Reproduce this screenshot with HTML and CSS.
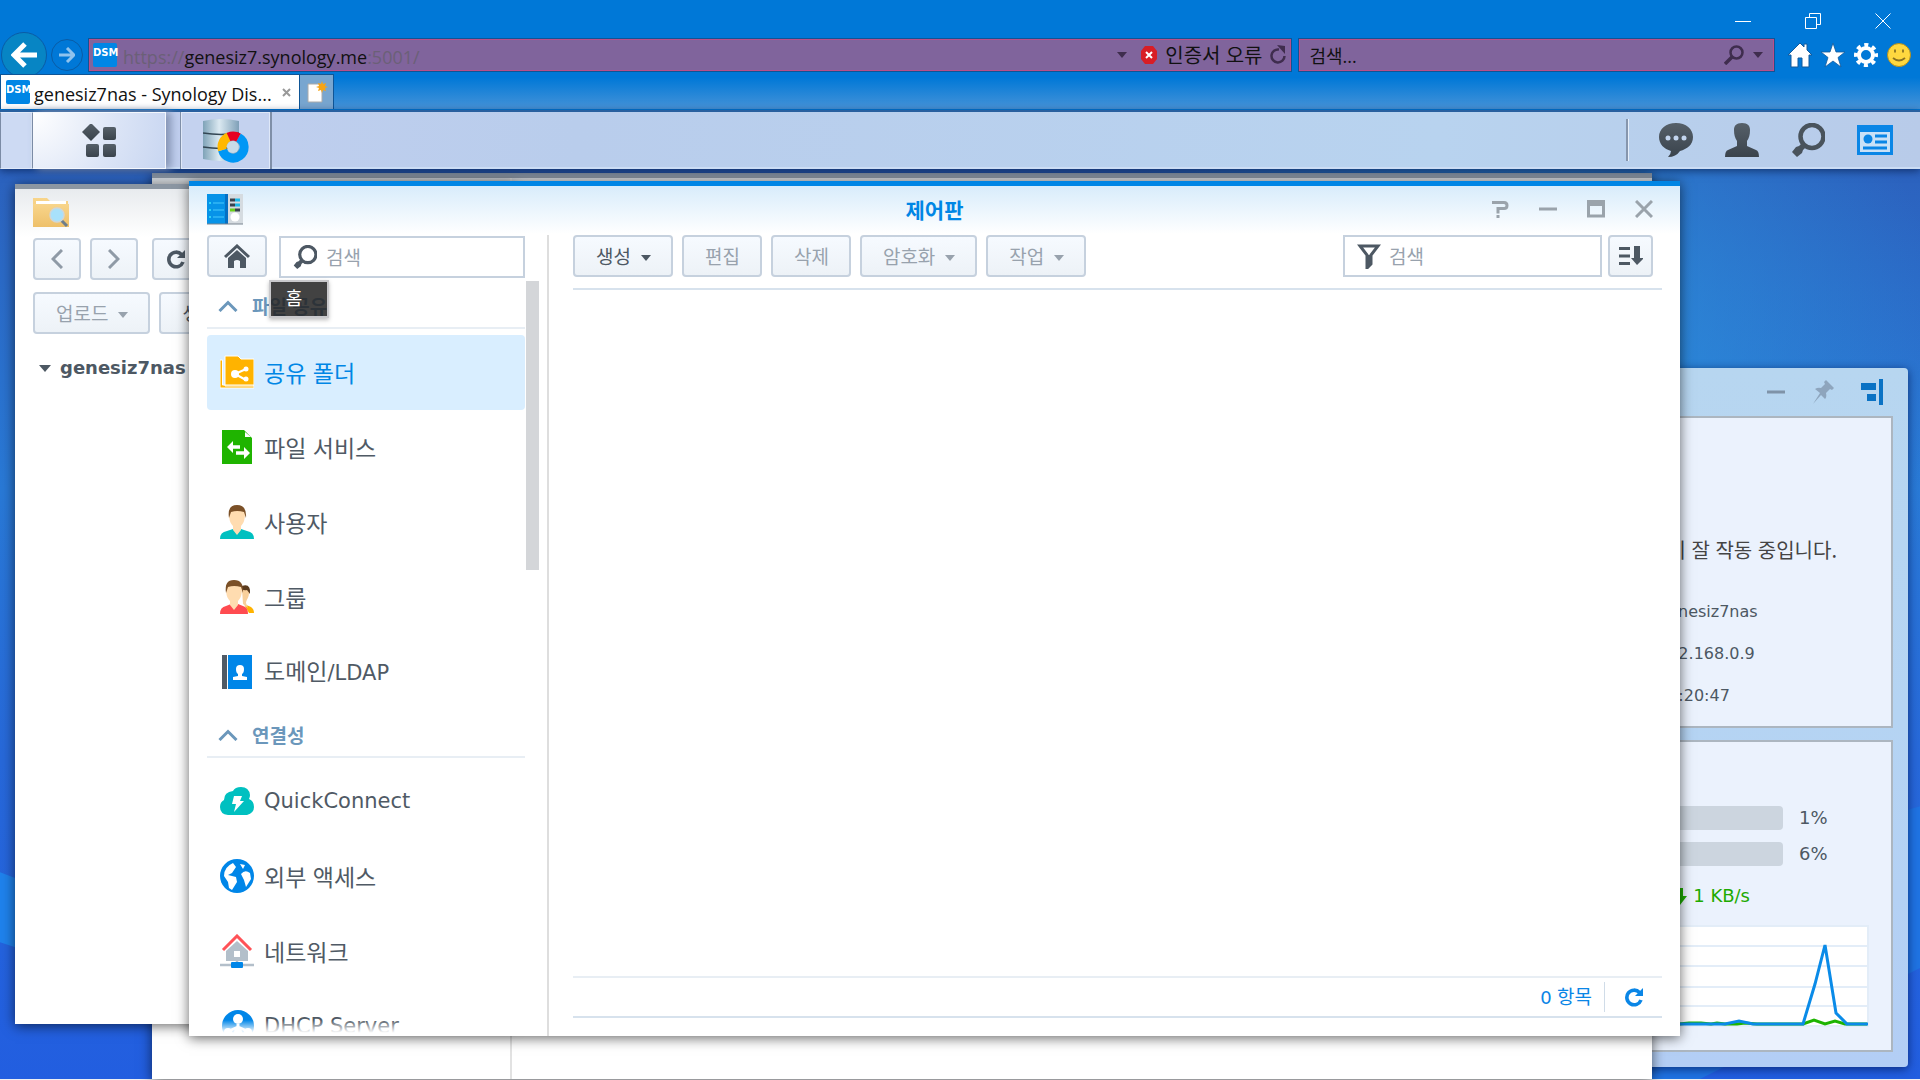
FILE: index.html
```html
<!DOCTYPE html>
<html lang="ko">
<head>
<meta charset="utf-8">
<title>genesiz7nas - Synology DiskStation</title>
<link rel="stylesheet" href="styles.css">
</head>
<body>
<svg class="defs" aria-hidden="true">
  <defs>
    <linearGradient id="g-dark" x1="0" y1="0" x2="0" y2="1"><stop offset="0" stop-color="#566069"/><stop offset="1" stop-color="#3a434c"/></linearGradient>
    <linearGradient id="g-disk" x1="0" y1="0" x2="1" y2="0"><stop offset="0" stop-color="#7fa3b8"/><stop offset=".45" stop-color="#dbe9f1"/><stop offset="1" stop-color="#7fa0b8"/></linearGradient>
    <linearGradient id="g-folder" x1="0" y1="0" x2="0" y2="1"><stop offset="0" stop-color="#f8d58b"/><stop offset="1" stop-color="#eec06a"/></linearGradient>
  </defs>
  <symbol id="i-search" viewBox="0 0 34 34"><circle cx="21" cy="13.500" r="11.500" fill="none" stroke="currentColor" stroke-width="4.500"/><path d="M11 20l4 4-3 3-1 3-5 4-5-5 4-5 3-1z" fill="currentColor"/></symbol>
  <symbol id="i-reload" viewBox="0 0 20 20"><path d="M15.500 5.500A7.300 7.300 0 1 0 17 13" fill="none" stroke="currentColor" stroke-width="3.600"/><path d="M19 1v8h-8z" fill="currentColor"/></symbol>
  <symbol id="i-up" viewBox="0 0 20 12"><path d="M1.500 11L10 2.500l8.500 8.500" fill="none" stroke="currentColor" stroke-width="3"/></symbol>
</svg>

<header class="browser">
  <div class="titlebar">
    <button class="sysbtn" aria-label="최소화"><svg width="16" height="16"><path d="M0 8.500h16" stroke="#fff" fill="none"/></svg></button>
    <button class="sysbtn" aria-label="이전 크기로"><svg width="16" height="16"><path d="M.5 4.500h11v11H.5zM4.500 4.500v-4h11v11h-4" stroke="#fff" fill="none"/></svg></button>
    <button class="sysbtn" aria-label="닫기"><svg width="16" height="16"><path d="M.5.5l15 15M15.500.5l-15 15" stroke="#fff" fill="none"/></svg></button>
  </div>
  <div class="navbar">
    <button class="back" aria-label="뒤로"><svg width="26" height="26" viewBox="0 0 26 26"><path d="M14 2L3 13l11 11M3 13h23" fill="none" stroke="#fff" stroke-width="5"/></svg></button>
    <button class="forward" aria-label="앞으로"><svg width="16" height="16" viewBox="0 0 16 16"><path d="M8 1l7 7-7 7M0 8h14" fill="none" stroke="#8fc3ee" stroke-width="3"/></svg></button>
    <div class="field address">
      <span class="favicon">DSM</span>
      <span class="url">https://<b>genesiz7.synology.me</b>:5001/</span>
      <i class="caret"></i>
      <svg class="shield" width="16" height="18" viewBox="0 0 16 18"><path d="M4 0h8l4 5v8l-4 5H4l-4-5V5z" fill="#d81e26"/><path d="M5 6l6 6M11 6l-6 6" stroke="#fff" stroke-width="2"/></svg>
      <span class="cert">인증서 오류</span>
      <svg class="nav-reload" width="18" height="20" viewBox="0 0 18 20"><path d="M10 4.500A6.500 6.500 0 1 0 15.500 11" fill="none" stroke="currentColor" stroke-width="2.500"/><path d="M8 0l8 1v8z" fill="currentColor"/></svg>
    </div>
    <label class="field websearch">
      <input type="text" placeholder="검색..." aria-label="웹 검색">
      <svg width="20" height="20" viewBox="0 0 20 20"><circle cx="12.500" cy="7.500" r="6" fill="none" stroke="currentColor" stroke-width="2.500"/><path d="M8 12l-7 7" stroke="currentColor" stroke-width="3.500"/></svg>
      <i class="caret"></i>
    </label>
    <div class="tools">
      <svg viewBox="0 0 24 24"><path d="M12 0L0 12h3v12h7v-9h4v9h7V12h3l-5-5V1h-3v3z" fill="#fff" stroke="#125a9c"/></svg>
      <svg viewBox="0 0 24 24"><path d="M12 0l3 9h9l-7 5.500 3 9.500-8-6-8 6 3-9.500L0 9h9z" fill="#fff" stroke="#125a9c" stroke-width=".8"/></svg>
      <svg viewBox="0 0 24 24"><circle cx="12" cy="12" r="7" fill="none" stroke="#fff" stroke-width="4"/><circle cx="12" cy="12" r="10" fill="none" stroke="#fff" stroke-width="4" stroke-dasharray="4 3.850" stroke-dashoffset="2"/></svg>
      <svg viewBox="0 0 24 24"><circle cx="12" cy="12" r="11.500" fill="#ffd83f" stroke="#b38f1c"/><path d="M8 6.500v3M16 6.500v3M6 15q6 5 12 0" fill="none" stroke="#8b7322" stroke-width="1.800"/></svg>
    </div>
  </div>
  <div class="tabs">
    <div class="tab"><span class="favicon">DSM</span><span class="tab-title">genesiz7nas - Synology Dis...</span><button class="tab-close" aria-label="탭 닫기"><svg width="9" height="9"><path d="M1 1l7 7M8 1L1 8" stroke="#999" stroke-width="2"/></svg></button></div>
    <button class="newtab" aria-label="새 탭"><svg width="22" height="22" viewBox="0 0 22 22"><path d="M2 3h14v18H2z" fill="#fff" stroke="#aaa"/><path d="M16 0l1 3 3-1-1 3 3 1-3 1 1 3-3-1-1 3-1-3-3 1 1-3-3-1 3-1-1-3 3 1z" fill="#f6a416"/></svg></button>
  </div>
</header>

<nav class="taskbar">
  <button class="task-edge" aria-label="바탕 화면 보기"></button>
  <button class="task-menu" aria-label="메인 메뉴"><svg width="34" height="34" viewBox="0 0 34 34"><g fill="url(#g-dark)"><path d="M9-1l9 9-9 9-9-9z"/><rect x="21" y="3" width="13" height="13" rx="2"/><rect x="4" y="20" width="13" height="13" rx="2"/><rect x="21" y="20" width="13" height="13" rx="2"/></g></svg></button>
  <span class="task-gap"></span>
  <button class="task-app" aria-label="저장소 관리자"><svg width="46" height="44" viewBox="0 0 46 44"><path d="M0 2q18-4 36 0v38q-18 4-36 0z" fill="url(#g-disk)"/><path d="M0 14q18 3 36 0M0 28q18 3 36 0" stroke="#334653" stroke-width="1.500" fill="none"/><circle cx="30" cy="28" r="6" fill="#c9dbe8"/><g fill="none" stroke-width="9"><path d="M35.500 18.500A11 11 0 1 1 19.500 31" stroke="#0097f5"/><path d="M19.400 31a11 11 0 0 1 6.600-13.200" stroke="#ffb800"/><path d="M25.500 18a11 11 0 0 1 10 .5" stroke="#e60020"/></g></svg></button>
  <div class="tray">
    <button aria-label="알림"><svg viewBox="0 0 34 34"><path d="M17 0c10 0 17 6 17 14s-6 12-13 14q-4 6-12 6q3-3 3-6C5 26 0 21 0 14 0 6 7 0 17 0z" fill="url(#g-dark)"/><g fill="#c3d5ee"><circle cx="9" cy="15" r="2.500"/><circle cx="17" cy="15" r="2.500"/><circle cx="25" cy="15" r="2.500"/></g></svg></button>
    <button aria-label="옵션"><svg viewBox="0 0 34 34"><path d="M17 0c6 0 8 3 8 7 0 5-1 8-3 11v5l9 4q3 1 3 7H0q0-6 3-7l9-4v-5C10 15 9 12 9 7c0-4 2-7 8-7z" fill="url(#g-dark)"/></svg></button>
    <button aria-label="검색"><svg><use href="#i-search"/></svg></button>
    <button aria-label="위젯"><svg class="wide" viewBox="0 0 36 30"><path d="M0 0h36v30H0z" fill="#0a86e6"/><path d="M3 7h30v20H3z" fill="#c9e1f7"/><circle cx="11" cy="14" r="4.500" fill="#0a86e6"/><path d="M18 11h12M18 17h12M6 23h24" stroke="#0a86e6" stroke-width="3"/></svg></button>
  </div>
</nav>

<main class="desktop">
  <svg class="wallpaper" viewBox="0 0 1920 911" preserveAspectRatio="none" aria-hidden="true"><path d="M0 704L200 780 200 840 0 774z" fill="#1f82ec"/><path d="M1640 720L1920 638V800L1700 911H1640z" fill="#1f73e2"/></svg>

  <aside class="widgets">
    <div class="widget-bar">
      <svg width="18" height="18"><path d="M0 9h18" stroke="#7f93a8" stroke-width="3"/></svg>
      <svg width="22" height="24" viewBox="0 0 22 24"><path d="M14 0l8 8-2 2-2-1-4 4q1 4-1 6l-4-4-8 9 7-11-5-4q3-2 6-1l4-4-1-2z" fill="#8ea5bd"/></svg>
      <svg width="22" height="26" viewBox="0 0 22 26"><path d="M0 4h15v7H0zM6 15h9v7H6zM18 0h4v26h-4z" fill="#0a72c4"/></svg>
    </div>
    <section class="widget health">
      <p class="health-msg">DiskStation이 잘 작동 중입니다.</p>
      <dl>
        <dt>서버 이름</dt><dd>genesiz7nas</dd>
        <dt>LAN 1</dt><dd>192.168.0.9</dd>
        <dt>가동 시간</dt><dd>01:20:47</dd>
      </dl>
    </section>
    <section class="widget monitor">
      <div class="meter"><span class="track"></span><b>1%</b></div>
      <div class="meter"><span class="track"></span><b>6%</b></div>
      <div class="rate"><svg width="14" height="17" viewBox="0 0 14 17"><path d="M4 0h6v8h4l-7 9-7-9h4z" fill="#1eaa00"/></svg><span>1 KB/s</span></div>
      <svg class="chart" viewBox="0 0 400 102" preserveAspectRatio="xMaxYMid meet"><path d="M0 0h400v102H0z" fill="#fff"/><path d="M0 1h399v100H0M0 21h400M0 41h400M0 62h400M0 81h400" fill="none" stroke="#e3edf8" stroke-width="2"/><path d="M0 99h210l10-1h12l10 1 6-1 8 1h12l8-1 12 1h46l11-4 11 4 10-3 10 3h22" fill="none" stroke="#1eb400" stroke-width="3"/><path d="M0 99h256l14-3 14 3h50l12-40 10-39 11 68 11 11h21" fill="none" stroke="#0a8be8" stroke-width="3"/></svg>
    </section>
  </aside>

  <section class="window back-window"><div class="back-side"></div></section>

  <section class="window station">
    <div class="station-title"><svg width="36" height="32" viewBox="0 0 36 32"><path d="M0 2h14l3 3h18v26H0z" fill="url(#g-folder)"/><path d="M3 5h30v3H3z" fill="#fff"/><path d="M0 8h36v23H0z" fill="url(#g-folder)"/><path d="M28 24l6 6" stroke="#6d7d8b" stroke-width="3"/><circle cx="24" cy="19" r="7" fill="#a8e1fb" stroke="#cfd6d8" stroke-width="1.500"/></svg></div>
    <div class="station-row nav-row">
      <button class="btn square" aria-label="이전"><svg width="12" height="20" viewBox="0 0 12 20"><path d="M11 1l-9 9 9 9" fill="none" stroke="#8f9aa6" stroke-width="3"/></svg></button>
      <button class="btn square" aria-label="다음"><svg width="12" height="20" viewBox="0 0 12 20"><path d="M1 1l9 9-9 9" fill="none" stroke="#8f9aa6" stroke-width="3"/></svg></button>
      <button class="btn square" aria-label="새로 고침"><svg class="dark" width="20" height="20"><use href="#i-reload"/></svg></button>
    </div>
    <div class="station-row">
      <button class="btn muted">업로드<i class="caret"></i></button>
      <button class="btn">생성<i class="caret"></i></button>
    </div>
    <div class="tree"><i class="caret big"></i>genesiz7nas</div>
  </section>

  <section class="window panel">
    <header class="panel-title">
      <svg width="36" height="31" viewBox="0 0 36 31"><path d="M20 0h16v30H20z" fill="#d5dbe0"/><path d="M0 0h21v30H0z" fill="#0793e8"/><path d="M18 0h3v30h-3z" fill="#0670c4"/><path d="M6 9h11M6 16h11M6 23h11" stroke="#28aef2" stroke-width="2"/><path d="M2 9h2M2 16h2M2 23h2" stroke="#2fd2f5" stroke-width="2"/><path d="M23 6h5M23 11h5M28 16h5" stroke="#38424c" stroke-width="3"/><path d="M28 6h5M28 11h5" stroke="#1cb8e8" stroke-width="3"/><path d="M23 16h5" stroke="#6bd01a" stroke-width="3"/><circle cx="28" cy="23" r="4.500" fill="#fff"/><path d="M0 30h36" stroke="#7a8590"/></svg>
      <h1>제어판</h1>
      <div class="controls">
        <button aria-label="도움말"><svg width="18" height="18"><path d="M1 2.500h12q3 0 3 3t-3 3H7v5" fill="none" stroke="#9aa3ab" stroke-width="3"/><path d="M5.500 15h3v3h-3z" fill="#9aa3ab"/></svg></button>
        <button aria-label="최소화"><svg width="18" height="18"><path d="M0 9h18" stroke="#9aa3ab" stroke-width="3"/></svg></button>
        <button aria-label="최대화"><svg width="18" height="18"><path d="M1.500 2v14h15V2" fill="none" stroke="#9aa3ab" stroke-width="3"/><path d="M0 0h18v6H0z" fill="#9aa3ab"/></svg></button>
        <button aria-label="닫기"><svg width="18" height="18"><path d="M1 1l16 16M17 1L1 17" stroke="#9aa3ab" stroke-width="3"/></svg></button>
      </div>
    </header>
    <div class="panel-body">
      <nav class="side">
        <div class="side-top">
          <div class="home-wrap">
            <button class="btn home" aria-label="홈"><svg width="26" height="24" viewBox="0 0 26 24"><path d="M1 13L13 2l12 11" fill="none" stroke="#4d5863" stroke-width="3"/><path d="M13 6l9 8v10h-6v-7q-3-2-6 0v7H4V14z" fill="#4d5863"/></svg></button>
            <span class="tooltip">홈</span>
          </div>
          <label class="input"><svg class="dark" width="24" height="24"><use href="#i-search"/></svg><input type="text" placeholder="검색" aria-label="설정 검색"></label>
        </div>
        <div class="list">
          <div class="list-inner">
            <h2><svg width="20" height="12"><use href="#i-up"/></svg>파일 공유</h2>
            <ul>
              <li class="on"><a href="#share"><svg viewBox="0 0 34 34"><path d="M0 5h2.500v25H34v3H0zM5 1h13l3 3h13v27H5z" fill="#ffb300" stroke="#fff"/><path d="M15 19l11-5M15 19l11 6" stroke="#fff" stroke-width="2"/><g fill="#fff"><circle cx="15" cy="19" r="4"/><circle cx="26" cy="14" r="2.500"/><circle cx="26" cy="24" r="2.500"/></g></svg><span>공유 폴더</span></a></li>
              <li><a href="#file"><svg viewBox="0 0 34 34"><path d="M2 0h22l8 8v26H2z" fill="#1fb400"/><path d="M25 2v5h6z" fill="#fff"/><path d="M20 17h-9M16 23h10" stroke="#fff" stroke-width="3.500"/><path d="M13 11v12l-6-6zM24 17v12l6-6z" fill="#fff"/></svg><span>파일 서비스</span></a></li>
              <li><a href="#user"><svg viewBox="0 0 34 34"><path d="M0 34q0-7 7-8l6-2h8l6 2q7 1 7 8z" fill="#00c0c0"/><path d="M9 8q0-6 8-6t8 6c0 6-1 10-4 13v4l-4 5-4-5v-4C10 18 9 14 9 8z" fill="#ffdcb0"/><path d="M9 13Q7 0 17 0t9 13l-2-6q-7-2-13 0z" fill="#7b5027"/></svg><span>사용자</span></a></li>
              <li><a href="#group"><svg viewBox="0 0 34 34"><path d="M24 24l7 3q3 2 3 6h-5z" fill="#ffb300"/><path d="M22 9q7-3 7 4c0 5-3 7-3 10l2 5-5-4z" fill="#f8cf9a"/><path d="M22 6q9-3 8 8l-3-4q-3 1-5-1z" fill="#5b3b1d"/><path d="M0 34q0-7 6-8l5-2h7l5 2q5 1 5 8z" fill="#ff4b50"/><path d="M6 8q0-6 8-6t8 6c0 6-1 10-4 13v4l-4 5-4-5v-4C7 18 6 14 6 8z" fill="#ffdcb0"/><path d="M6 13Q4 0 14 0t9 13l-2-6q-7-2-13 0z" fill="#7b5027"/></svg><span>그룹</span></a></li>
              <li><a href="#domain"><svg viewBox="0 0 34 34"><path d="M2 0h5v34H2z" fill="#505b66"/><path d="M8 0h24v34H8z" fill="#0086e8"/><path d="M20 10q4 0 4 4t-2 5v2l5 1v3H13v-3l5-1v-2q-2-1-2-5t4-4z" fill="#fff"/></svg><span>도메인<span class="latin">/LDAP</span></span></a></li>
            </ul>
            <h2><svg width="20" height="12"><use href="#i-up"/></svg>연결성</h2>
            <ul>
              <li><a href="#qc"><svg viewBox="0 0 34 34"><path d="M8 31q-8-1-8-8 0-5 4-7 0-8 9-9 2-4 8-4 8 0 9 8 0 2-1 4 5 2 5 8t-7 8z" fill="#00c0c0"/><path d="M14 12h8l-2 5h4L14 28l2-8h-4z" fill="#fff"/></svg><span class="latin">QuickConnect</span></a></li>
              <li><a href="#ext"><svg viewBox="0 0 34 34"><circle cx="17" cy="17" r="17" fill="#0086e8"/><path d="M4 17q0-9 9-13l3 4-4 6-4 2 8 2 1 5-5 8-3-2-1-6zM20 5l5 1-2 4zM21 15q4-5 9-1l1 6-5 8-2-7z" fill="#fff"/></svg><span>외부 액세스</span></a></li>
              <li><a href="#net"><svg viewBox="0 0 34 34"><path d="M17 7l11 10v10H6V17z" fill="#b3bfca"/><path d="M14 17h6v6h-6z" fill="#fff"/><path d="M3 16L17 2l14 14" fill="none" stroke="#ff5257" stroke-width="3"/><path d="M0 31h34M17 26v4" stroke="#b3bfca" stroke-width="2.500"/><rect x="11" y="28" width="12" height="6" rx="1" fill="#0086e8"/></svg><span>네트워크</span></a></li>
              <li><a href="#dhcp"><svg viewBox="0 0 34 34"><circle cx="18" cy="17" r="16" fill="#0086e8"/><path d="M18 15v6M18 18l-9 4M18 18l9 4" stroke="#fff" stroke-width="3"/><g fill="#fff"><circle cx="18" cy="10" r="5"/><circle cx="8" cy="23" r="4"/><circle cx="18" cy="23" r="4"/><circle cx="28" cy="23" r="4"/></g></svg><span class="latin">DHCP Server</span></a></li>
            </ul>
          </div>
          <div class="scrollbar"></div>
          <div class="fade"></div>
        </div>
      </nav>
      <div class="content">
        <div class="toolbar">
          <button class="btn">생성<i class="caret"></i></button>
          <button class="btn muted">편집</button>
          <button class="btn muted">삭제</button>
          <button class="btn muted">암호화<i class="caret"></i></button>
          <button class="btn muted">작업<i class="caret"></i></button>
          <label class="input filter"><svg width="24" height="25" viewBox="0 0 24 25"><path d="M3 2h18l-7 9v9l-4 4V11z" fill="none" stroke="#4d5863" stroke-width="3"/><path d="M10 11h5v9l-5 5z" fill="#4d5863"/></svg><input type="text" placeholder="검색" aria-label="필터"></label>
          <button class="btn sort" aria-label="정렬"><svg width="24" height="20" viewBox="0 0 24 20"><path d="M0 2.500h11M0 10h11M0 17.500h11" stroke="#4d5863" stroke-width="3"/><path d="M15 0h6v12h4l-7 7-6-7h3z" fill="#4d5863"/></svg></button>
        </div>
        <div class="canvas"></div>
        <footer class="status"><span><span class="latin-sm">0</span> 항목</span><button class="refresh" aria-label="새로 고침"><svg width="20" height="20"><use href="#i-reload"/></svg></button></footer>
      </div>
    </div>
  </section>
</main>
</body>
</html>
```
FILE: styles.css
```css
* { box-sizing: border-box; }
body {
  margin: 0;
  height: 100vh;
  min-height: 700px;
  display: flex;
  flex-direction: column;
  overflow: hidden;
  font: 19px/28px "Noto Sans CJK KR", sans-serif;
  color: #4d5863;
  background: #0078d7;
}
button, input { font: inherit; color: inherit; margin: 0; padding: 0; border: 0; background: none; }
button { display: flex; align-items: center; justify-content: center; }
svg { display: block; flex: none; }
h1, h2, p, ul, dl, dd { margin: 0; padding: 0; }
.defs { position: absolute; width: 0; height: 0; }
.dark { color: #4d5863; }

/* browser frame */
.browser { font-family: "Open Sans", "Noto Sans CJK KR", sans-serif; font-size: 18px; color: #111; }
.titlebar { height: 32px; display: flex; justify-content: flex-end; align-items: flex-end; padding: 0 2px 3px 0; }
.sysbtn { width: 70px; height: 16px; }
.navbar { height: 42px; display: flex; align-items: flex-start; padding: 0 9px 0 1px; }
.back { width: 46px; height: 46px; border: 1px solid #0a5ca6; border-radius: 50%; background: #0785c4; }
.forward { width: 32px; height: 32px; margin: 7px 5px 0 4px; border: 1px solid #0a5ca6; border-radius: 50%; }
.field { display: flex; align-items: center; height: 34px; margin-top: 6px; border: 1px solid #0f5596; background: #80649c; box-shadow: inset 0 0 0 1px #b9508a; color: #3f2d4e; min-width: 0; }
.address { flex: 1; margin-right: 6px; padding: 0 4px; }
.websearch { flex: none; width: 25%; padding: 0 11px; }
.websearch input { flex: 1; min-width: 0; padding-top: 2px; outline: 0; font-size: 18px; }
.websearch input::placeholder { color: #111; opacity: 1; }
.websearch .caret { margin-left: 9px; }
.favicon { width: 24px; height: 24px; flex: none; border-radius: 2px; background: #0086e5; color: #fff; font: bold 10px/20px "DejaVu Sans", sans-serif; text-align: center; }
.url { flex: 1; margin-left: 6px; padding-top: 4px; color: #6b6077; white-space: nowrap; }
.url b { font-weight: normal; color: #111; }
.shield { margin: 0 8px 0 14px; }
.cert { padding-top: 2px; color: #111; white-space: nowrap; font-size: 20px; }
.nav-reload { margin-left: 6px; }
.tools { display: flex; gap: 9px; margin: 11px 0 0 13px; }
.tools svg { width: 24px; height: 24px; overflow: visible; }
.tabs { position: relative; display: flex; height: 36px; border-bottom: 1px solid #0078d7; background: linear-gradient(#0078d7 10%, #4693d8); }
.tab { width: 300px; display: flex; align-items: center; padding: 0 8px 0 5px; background: #fff; border: 1px solid #0f5596; border-bottom: 0; }
.tab-title { flex: 1; margin-left: 4px; padding-top: 4px; white-space: nowrap; }
.tab-close { width: 9px; height: 9px; }
.newtab { width: 34px; background: #78a6d0; border: 1px solid #0f5596; border-width: 1px 1px 0 0; }

/* desktop taskbar */
.taskbar { position: relative; z-index: 5; height: 59px; flex: none; display: flex; border-top: 2px solid #29609f; background: linear-gradient(90deg, #c3cfef, #b9cdec 30%, #b8d3ef 75%, #b8cbe9); box-shadow: inset 0 -2px #cbdcf4, 0 2px 8px rgba(0, 20, 60, .6); }
.task-edge { width: 32px; border: 1px solid #dfe8f8; border-left-color: #7b8ba5; background: #cddaf3; }
.task-menu { width: 134px; border: 1px solid #f4f7fd; border-left-color: #7b8ba5; background: radial-gradient(circle at 0 0, #fff, #dbe4f6 60%, #c8d6f1); box-shadow: 5px 0 8px #8393b3; }
.task-gap { width: 14px; }
.task-app { width: 92px; border: 1px solid #7f8fa8; border-width: 0 2px 0 1px; background: #c4d2ef; box-shadow: inset 0 0 0 1px #dfe8f8; }
.tray { margin-left: auto; display: flex; align-items: center; gap: 32px; padding: 0 29px 2px 0; }
.tray::before { content: ""; width: 2px; height: 42px; background: #8696ad; border-right: 1px solid #e6effa; margin-right: -2px; }
.tray svg { width: 34px; height: 34px; color: #49535c; }
.tray .wide { width: 36px; height: 30px; margin-right: -2px; }

/* wallpaper and windows */
.desktop { position: relative; flex: 1; border-bottom: 1px solid #eef0f4; background: radial-gradient(circle at 79% 23%, rgba(44, 148, 222, .9), transparent 26%), linear-gradient(#2c62be, #2979d6 35%, #2768d9 65%, #225ee0); }
.wallpaper { position: absolute; inset: 0; width: 100%; height: 100%; }
.window { position: absolute; background: #fff; border-top: 5px solid #8b96a2; box-shadow: 0 2px 12px rgba(0, 0, 0, .6); }
.back-window { left: 152px; right: 268px; top: 4px; bottom: 0; background: linear-gradient(#d3d8dd, #fff 50px); }
.back-side { width: 360px; height: 100%; border-right: 2px solid #e2e2e2; }
.station { left: 15px; top: 15px; bottom: 55px; width: 500px; padding: 0 18px; background: linear-gradient(#e8ebee, #fff 48px); overflow: hidden; }
.station-title { height: 49px; padding-top: 7px; }
.station-row { display: flex; gap: 9px; margin-bottom: 12px; }
.nav-row .btn:last-child { margin-left: 5px; }
.tree { display: flex; align-items: center; padding: 8px 6px; font: bold 18px/28px "DejaVu Sans", sans-serif; }

.btn { height: 42px; padding: 0 20px 0 21px; border: 2px solid #c6d1de; border-radius: 4px; background: linear-gradient(#f6faff, #edf2f7); white-space: nowrap; }
.btn.square { width: 48px; padding: 0; }
.muted { color: #98a2ad; }
.caret { flex: none; width: 0; height: 0; margin-left: 10px; border: 5px solid transparent; border-top: 6px solid currentColor; border-bottom: 0; }
.btn .caret { margin-top: 4px; }
.caret.big { margin: 0 9px 0 0; border-width: 7px 6px 0; }
.input { display: flex; align-items: center; gap: 9px; height: 42px; padding: 0 12px; border: 2px solid #c6d1de; background: #fff; }
.input input { flex: 1; min-width: 0; outline: 0; }
.input input::placeholder { color: #98a2ad; opacity: 1; }

/* control panel */
.panel { left: 189px; right: 240px; top: 12px; bottom: 43px; display: flex; flex-direction: column; border-top-color: #0086e5; background: linear-gradient(#d8ecfb, #fff 48px); }
.panel-title { height: 49px; flex: none; display: grid; grid-template-columns: 1fr auto 1fr; align-items: center; padding: 0 18px 3px; }
.panel-title h1 { font-size: 21px; font-weight: bold; color: #0086e5; }
.controls { display: flex; justify-content: flex-end; gap: 30px; padding-right: 9px; }
.panel-body { flex: 1; min-height: 0; display: grid; grid-template-columns: 360px 1fr; }
.side { display: flex; flex-direction: column; min-height: 0; padding-left: 18px; border-right: 2px solid #dedede; }
.side-top { display: flex; gap: 12px; padding-right: 22px; height: 46px; }
.home-wrap { position: relative; }
.home { width: 60px; padding: 0; }
.side-top .input { flex: 1; min-width: 0; margin-top: 1px; }
.tooltip { position: absolute; z-index: 3; left: 62px; top: 45px; width: 60px; height: 38px; border: 2px solid #c9c9cc; background: rgba(35, 35, 35, .86); color: #fff; text-align: center; font-size: 18px; line-height: 30px; box-shadow: 0 2px 4px rgba(0, 0, 0, .25); padding-right: 10px; }
.list { position: relative; flex: 1; min-height: 0; margin-right: 8px; overflow: hidden; display: flex; }
.list-inner { width: 318px; }
.list ul { list-style: none; padding-top: 6px; }
.list h2 { display: flex; align-items: center; gap: 14px; height: 48px; padding: 4px 10px 0 11px; border-bottom: 2px solid #e8eef4; font-size: 19px; font-weight: bold; color: #6b97bb; }
.list a { display: flex; align-items: center; gap: 10px; height: 75px; padding: 0 0 2px 13px; border-radius: 4px; color: #505a65; font-size: 23px; text-decoration: none; }
.list a svg { width: 34px; height: 34px; }
.list .on a { background: #d9eeff; color: #0086e5; }
.list .latin { font-family: "DejaVu Sans", sans-serif; font-size: 21px; }
.latin-sm { font-family: "DejaVu Sans", sans-serif; font-size: 18px; }
.scrollbar { position: absolute; left: 319px; top: 0; width: 13px; height: 289px; background: #d4d6d9; }
.fade { position: absolute; left: 0; right: 0; bottom: 0; height: 16px; background: linear-gradient(rgba(255, 255, 255, 0), #fff 80%); }

.content { display: flex; flex-direction: column; min-width: 0; padding: 0 18px 18px 24px; }
.toolbar { display: flex; gap: 9px; padding: 0 9px 11px 0; border-bottom: 2px solid #d7e2ed; }
.filter { width: 259px; margin: 0 -3px 0 auto; gap: 8px; }
.sort { width: 45px; padding: 0; }
.canvas { flex: 1; }
.status { display: flex; justify-content: flex-end; align-items: center; height: 42px; border-top: 2px solid #e8eef4; border-bottom: 2px solid #d7e2ed; color: #0a86e6; }
.refresh { width: 58px; height: 30px; margin-left: 12px; border-left: 1px solid #d0dce8; }

/* widget column */
.widgets { position: absolute; right: 12px; top: 199px; bottom: 12px; width: 480px; display: flex; flex-direction: column; gap: 12px; padding: 0 15px 15px; border-radius: 4px; background: linear-gradient(#b7d6f0, #b5d4f3 50%, #b3cef5); box-shadow: 0 2px 10px rgba(0, 20, 80, .7); }
.widget-bar { display: flex; justify-content: flex-end; align-items: center; gap: 27px; height: 36px; padding: 12px 10px 0 0; }
.widget { border: 2px solid #acb6c0; background: #ebf2fd; }
.health { padding: 118px 54px 16px 0; }
.health-msg { text-align: right; font-size: 20px; line-height: 28px; color: #444; }
.health dl { display: grid; grid-template-columns: 1fr 179px; row-gap: 14px; margin-top: 34px; font: 16px/28px "DejaVu Sans", "Noto Sans CJK KR", sans-serif; }
.health dt { padding-left: 24px; }
.monitor { flex: 1; padding: 64px 22px 0 0; font: 18px/24px "DejaVu Sans", sans-serif; }
.meter { display: flex; gap: 16px; margin-bottom: 12px; }
.meter .track { flex: 1; height: 24px; border-radius: 4px; background: #ccd5df; }
.meter b { width: 70px; font-weight: normal; }
.rate { display: flex; align-items: center; justify-content: flex-end; gap: 6px; height: 28px; margin-top: 16px; padding-right: 119px; color: #1eaa00; }
.chart { width: 100%; height: 102px; margin-top: 15px; }
```
